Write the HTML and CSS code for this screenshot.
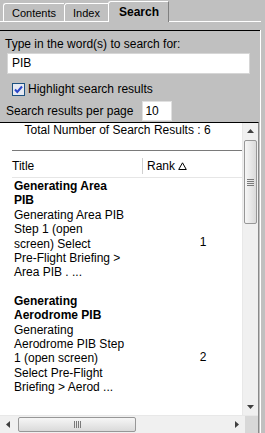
FILE: index.html
```html
<!DOCTYPE html>
<html lang="en">
<head>
    <meta charset="UTF-8">
    <meta name="viewport" content="width=device-width, initial-scale=1.0">
    <title>Search</title>
    <link rel="stylesheet" href="styles.css">
</head>
<body>
    <div class="pane">
        <div class="tabs">
            <div class="tab">Contents</div>
            <div class="tab">Index</div>
            <div class="tab active">Search</div>
        </div>

        <div class="panel">
            <div class="frame">
                <div class="prompt">Type in the word(s) to search for:</div>
                <div class="query">PIB</div>

                <div class="check">
                    <span class="box">
                        <svg width="13" height="13" viewBox="0 0 13 13">
                            <rect x="0.5" y="0.5" width="12" height="12" fill="#e6e9f2" stroke="#1c5180"/>
                            <path d="M3 6.5 L5.3 9 L10 3.5" fill="none" stroke="#2a45c8" stroke-width="2"/>
                        </svg>
                    </span>
                    Highlight search results
                </div>

                <div class="perpage">Search results per page <span class="count">10</span></div>

                <div class="results">
                    <div class="view">
                        <div class="content">
                            <div class="total">Total Number of Search Results : 6</div>
                            <div class="hits">
                                <div class="hits-head">
                                    <div class="head-title">Title</div>
                                    <div class="head-rank">
                                        <span>Rank
                                            <svg width="9" height="8" viewBox="0 0 9 8"><path d="M4.5 0.8 L8.3 7.5 L0.7 7.5 Z" fill="none" stroke="#000" stroke-width="1"/></svg>
                                        </span>
                                    </div>
                                </div>

                                <div class="hit">
                                    <div class="hit-title">
                                        <div class="hit-name">Generating Area PIB</div>
                                        <div>Generating Area PIB Step 1 (open screen) Select Pre-&#8288;Flight Briefing &gt; Area PIB . ...</div>
                                    </div>
                                    <div class="hit-rank">1</div>
                                </div>

                                <div class="hit">
                                    <div class="hit-title">
                                        <div class="hit-name">Generating Aerodrome PIB</div>
                                        <div>Generating Aerodrome PIB Step 1 (open screen) Select Pre-&#8288;Flight Briefing &gt; Aerod ...</div>
                                    </div>
                                    <div class="hit-rank">2</div>
                                </div>
                            </div>
                        </div>

                        <div class="vbar">
                            <div class="arrow"><svg width="7" height="4" viewBox="0 0 7 4"><path d="M3.5 0 L7 4 L0 4 Z" fill="#404040"/></svg></div>
                            <div class="vtrack">
                                <div class="vthumb">
                                    <svg width="7" height="7" viewBox="0 0 7 7"><path d="M0 0.5 H7 M0 2.5 H7 M0 4.5 H7 M0 6.5 H7" stroke="#7a7a7a"/></svg>
                                </div>
                            </div>
                            <div class="arrow"><svg width="7" height="4" viewBox="0 0 7 4"><path d="M0 0 L7 0 L3.5 4 Z" fill="#404040"/></svg></div>
                        </div>
                    </div>

                    <div class="hbar">
                        <div class="arrow"><svg width="4" height="7" viewBox="0 0 4 7"><path d="M0 3.5 L4 0 L4 7 Z" fill="#404040"/></svg></div>
                        <div class="htrack">
                            <div class="hthumb">
                                <svg width="7" height="7" viewBox="0 0 7 7"><path d="M0.5 0 V7 M2.5 0 V7 M4.5 0 V7 M6.5 0 V7" stroke="#7a7a7a"/></svg>
                            </div>
                        </div>
                        <div class="arrow"><svg width="4" height="7" viewBox="0 0 4 7"><path d="M0 0 L4 3.5 L0 7 Z" fill="#404040"/></svg></div>
                        <div class="corner"></div>
                    </div>
                </div>
            </div>
        </div>
    </div>
</body>
</html>
```

FILE: styles.css
```css
body {
    margin: 0;
    background-color: #c0c0c0;
    font-family: "Liberation Sans", Arial, sans-serif;
    font-size: 12px;
    color: #000;
}

.pane {
    width: 261px;
    height: 433px;
}

/* tabs */
.tabs {
    display: flex;
    align-items: flex-end;
    height: 21px;
    padding-left: 3px;
    border-bottom: 1px solid #fff;
}

.tab {
    height: 17px;
    line-height: 18px;
    padding: 0 8px;
    font-size: 11px;
    border-top: 1px solid #fff;
    border-left: 1px solid #fff;
    border-right: 1px solid #808080;
    border-top-left-radius: 3px;
    margin-right: -1px;
}

.tab.active {
    height: 20px;
    line-height: 20px;
    margin-bottom: -1px;
    padding: 0 9px 0 10px;
    font-size: 12px;
    font-weight: bold;
    background-color: #c0c0c0;
    position: relative;
}

.panel {
    width: 260px;
    border-right: 1px solid #fff;
    height: 411px;
}

.frame {
    margin-top: 8px;
    border-top: 1px solid #000;
}

.prompt {
    padding: 6px 0 0 5px;
    line-height: 14px;
}

.query {
    margin: 2px 0 0 7px;
    width: 237px;
    height: 19px;
    line-height: 19px;
    padding-left: 4px;
    background-color: #fff;
    border: 1px solid #d6d6d6;
}

.check {
    display: flex;
    align-items: center;
    height: 14px;
    margin: 8px 0 0 12px;
    gap: 3px;
}

.box {
    display: block;
    height: 13px;
}

.perpage {
    display: flex;
    align-items: center;
    margin: 5px 0 0 6px;
    height: 20px;
    gap: 9px;
}

.count {
    display: block;
    width: 26px;
    height: 18px;
    line-height: 18px;
    padding-left: 2px;
    background-color: #fff;
    border: 1px solid #e0e0e0;
}

/* results list */
.results {
    margin-top: 1px;
    width: 259px;
    border-top: 1px solid #000;
    border-right: 1px solid #8a8a8a;
    box-sizing: border-box;
}

.view {
    display: flex;
    height: 292px;
}

.content {
    width: 243px;
    background-color: #fff;
    overflow: hidden;
}

.total {
    line-height: 14px;
    text-align: center;
    padding-right: 7px;
    margin-bottom: 13px;
    white-space: nowrap;
}

.hits {
    margin-left: 12px;
    width: 252px;
    border-top: 1px solid #7a7a7a;
    line-height: 14.4px;
}

.hits-head {
    display: flex;
    padding: 7px 0 3px;
    border-bottom: 1px solid #e6e6e6;
    line-height: 16px;
}

.head-title {
    width: 130px;
}

.head-rank span {
    display: flex;
    align-items: center;
    gap: 3px;
    height: 16px;
    padding-left: 4px;
    border-left: 1px solid #d0d0d0;
}

.hit {
    display: flex;
}

.hit-title {
    width: 130px;
    box-sizing: border-box;
    padding: 1px 16.6px 13px 2px;
}

.hit-name {
    font-weight: bold;
}

.hit-rank {
    width: 122px;
    align-self: center;
    text-align: center;
    padding: 14px 0 1px;
}

/* scrollbars */
.vbar {
    width: 15px;
    display: flex;
    flex-direction: column;
    background-color: #f0f0f0;
    border-left: 1px solid #e8e8e8;
}

.vbar .arrow {
    height: 16px;
    display: flex;
    align-items: center;
    justify-content: center;
}

.vtrack {
    flex: 1;
    padding-top: 1px;
}

.vthumb {
    height: 84px;
    margin: 0 1px;
    border: 1px solid #979797;
    border-radius: 2px;
    background: linear-gradient(to right, #f6f6f6, #dadada);
    box-sizing: border-box;
    display: flex;
    align-items: center;
    justify-content: center;
}

.hbar {
    display: flex;
    height: 17px;
    background-color: #f0f0f0;
    border-top: 1px solid #e8e8e8;
}

.hbar .arrow {
    width: 16px;
    display: flex;
    align-items: center;
    justify-content: center;
}

.htrack {
    width: 211px;
    padding-left: 2px;
    display: flex;
}

.hthumb {
    width: 118px;
    margin: 1px 0;
    border: 1px solid #979797;
    border-radius: 2px;
    background: linear-gradient(to bottom, #f6f6f6, #dadada);
    box-sizing: border-box;
    display: flex;
    align-items: center;
    justify-content: center;
}

.corner {
    flex: 1;
    background-color: #d8d8d8;
}
```
